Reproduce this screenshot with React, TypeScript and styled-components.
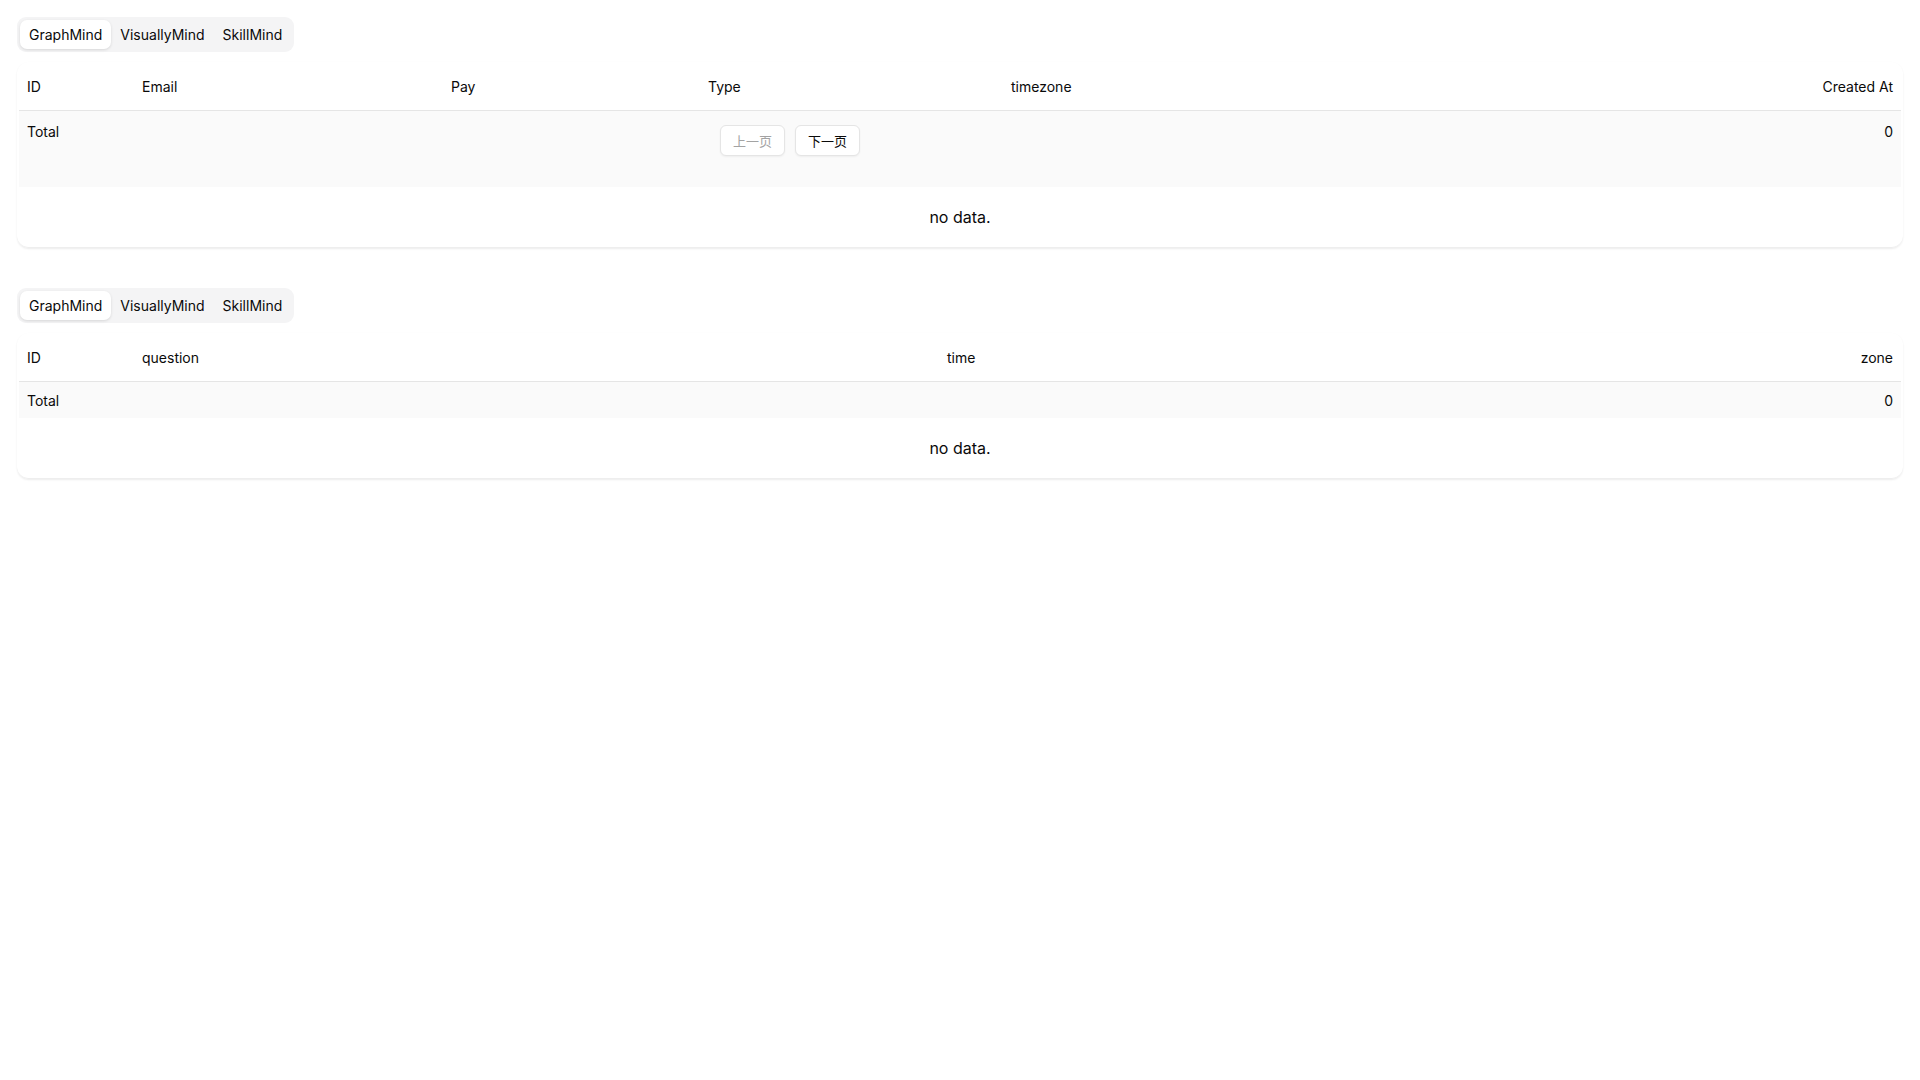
import styled, { createGlobalStyle } from 'styled-components';

const GlobalStyle = createGlobalStyle`
  body {
    margin: 0;
    background: #fff;
    font-family: Inter, "Noto Sans CJK SC", sans-serif;
    color: #0a0a0a;
  }
`;

const Page = styled.div`
  padding: 17px 17px;
  display: flex;
  flex-direction: column;
  gap: 40px;
`;

const Section = styled.div`
  display: flex;
  flex-direction: column;
  gap: 10px;
`;

const TabList = styled.div`
  align-self: flex-start;
  display: flex;
  padding: 3px;
  background: #f4f4f5;
  border-radius: 9px;
`;

const Tab = styled.button<{ $active?: boolean }>`
  border: none;
  font: inherit;
  font-size: 14px;
  color: #0a0a0a;
  padding: 6px 9px;
  border-radius: 7px;
  background: ${p => (p.$active ? '#fff' : 'transparent')};
  box-shadow: ${p => (p.$active ? '0 1px 3px rgba(0,0,0,0.12)' : 'none')};
`;

const Card = styled.div`
  border-radius: 12px;
  box-shadow: 0 1px 2px rgba(0,0,0,0.08);
  border-bottom: 1px solid #eee;
  padding: 0 2px;
`;

const Table = styled.table`
  width: 100%;
  border-collapse: collapse;
  font-size: 14px;
`;

const Th = styled.th<{ $right?: boolean; $w?: string }>`
  font-weight: 400;
  text-align: ${p => (p.$right ? 'right' : 'left')};
  padding: 0 8px;
  height: 48px;
  width: ${p => p.$w || 'auto'};
  border-bottom: 1px solid #e5e5e5;
`;

const FootRow = styled.tr`
  background: #fafafa;
`;

const Td = styled.td<{ $right?: boolean; $h: number }>`
  text-align: ${p => (p.$right ? 'right' : 'left')};
  padding: ${p => (p.$h > 40 ? '12px 8px 0' : '0 8px')};
  height: ${p => p.$h}px;
  vertical-align: ${p => (p.$h > 40 ? 'top' : 'middle')};
`;

const Pager = styled.div`
  display: flex;
  gap: 10px;
  padding-top: 14px;
`;

const PageButton = styled.button<{ $disabled?: boolean }>`
  font: inherit;
  font-size: 13px;
  background: #fff;
  border: 1px solid #e5e5e5;
  border-radius: 6px;
  height: 31px;
  padding: 0 12px;
  color: ${p => (p.$disabled ? '#a3a3a3' : '#0a0a0a')};
  box-shadow: 0 1px 2px rgba(0,0,0,0.05);
`;

const Empty = styled.div`
  text-align: center;
  font-size: 16px;
  height: 60px;
  line-height: 60px;
`;

const Tabs = () => (
  <TabList>
    <Tab $active>GraphMind</Tab>
    <Tab>VisuallyMind</Tab>
    <Tab>SkillMind</Tab>
  </TabList>
);

export default function App() {
  return (
    <Page>
      <GlobalStyle />
      <Section>
        <Tabs />
        <Card>
          <Table>
            <thead>
              <tr>
                <Th $w="99px">ID</Th>
                <Th $w="293px">Email</Th>
                <Th $w="241px">Pay</Th>
                <Th $w="287px">Type</Th>
                <Th>timezone</Th>
                <Th $right>Created At</Th>
              </tr>
            </thead>
            <tbody>
              <FootRow>
                <Td $h={64}>Total</Td>
                <Td $h={64} />
                <Td $h={64} />
                <Td $h={64} colSpan={2} style={{ padding: '0 8px 0 20px' }}>
                  <Pager>
                    <PageButton $disabled>上一页</PageButton>
                    <PageButton>下一页</PageButton>
                  </Pager>
                </Td>
                <Td $h={64} $right>0</Td>
              </FootRow>
            </tbody>
          </Table>
          <Empty>no data.</Empty>
        </Card>
      </Section>
      <Section>
        <Tabs />
        <Card>
          <Table>
            <thead>
              <tr>
                <Th $w="99px">ID</Th>
                <Th $w="789px">question</Th>
                <Th>time</Th>
                <Th $right>zone</Th>
              </tr>
            </thead>
            <tbody>
              <FootRow>
                <Td $h={36}>Total</Td>
                <Td $h={36} />
                <Td $h={36} />
                <Td $h={36} $right>0</Td>
              </FootRow>
            </tbody>
          </Table>
          <Empty>no data.</Empty>
        </Card>
      </Section>
    </Page>
  );
}
